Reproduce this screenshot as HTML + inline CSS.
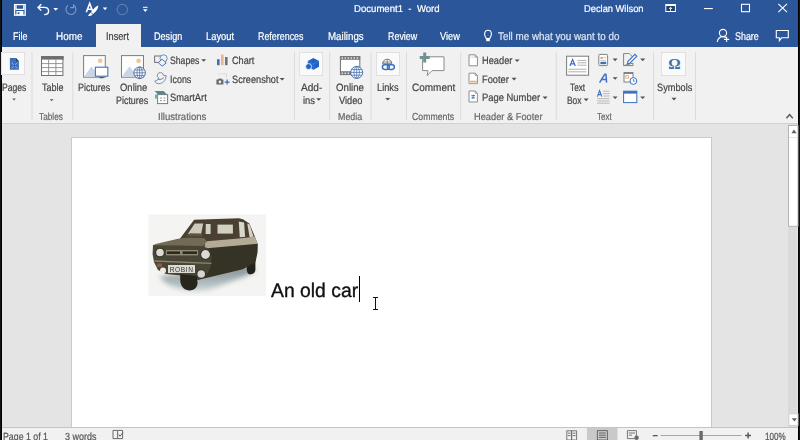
<!DOCTYPE html>
<html><head><meta charset="utf-8">
<style>
html,body{margin:0;padding:0;width:800px;height:440px;overflow:hidden;background:#000}
.t{position:absolute;font-family:"Liberation Sans",sans-serif;line-height:1;white-space:pre;text-rendering:geometricPrecision;transform-origin:0 0;-webkit-text-stroke:0.2px currentColor}
.a{position:absolute}
svg{position:absolute;overflow:visible}
</style></head><body>
<div class="a" style="left:0;top:0;width:1px;height:440px;background:#121212"></div>
<div class="a" style="left:799px;top:0;width:1px;height:440px;background:#121212"></div>
<!-- title + tabs -->
<div class="a" style="left:2px;top:0;width:796px;height:47px;background:#2b579a"></div>
<div class="a" style="left:96px;top:24px;width:45px;height:23px;background:#f1f1f1"></div>
<!-- ribbon -->
<div class="a" style="left:2px;top:47px;width:796px;height:76px;background:#f1f1f1"></div>
<div class="a" style="left:2px;top:123px;width:796px;height:1px;background:#d2d2d2"></div>
<!-- canvas -->
<div class="a" style="left:2px;top:124px;width:786px;height:303px;background:#e4e4e4"></div>
<div class="a" style="left:788px;top:124px;width:10px;height:303px;background:#dadada;box-shadow:inset -1px 0 #e6e6e6"></div>
<!-- page -->
<div class="a" style="left:71px;top:137px;width:641px;height:290px;background:#c9c9c9"></div>
<div class="a" style="left:72px;top:138px;width:639px;height:289px;background:#ffffff"></div>
<!-- status -->
<div class="a" style="left:2px;top:427px;width:796px;height:13px;background:#f1f1f1;box-shadow:inset 0 1px #c4c4c4"></div>
<svg width="800" height="440" viewBox="0 0 800 440" style="left:0;top:0">
<!-- ===== Title bar ===== -->
<g fill="none" stroke="#fff" stroke-width="1.3">
  <!-- save -->
  <rect x="14.6" y="4.6" width="10.6" height="10.6"/>
  <path d="M16 5.2 V9.4 H23.8 V5.2"/>
</g>
<rect x="16.4" y="11" width="7" height="4.2" fill="#fff"/>
<rect x="17.6" y="12.3" width="1.8" height="1.8" fill="#2b579a"/>
<!-- undo -->
<path d="M38.3 7.4 H44.2 C47 7.4 48.6 9.2 48.6 11 C48.6 12.9 47 14.6 44.2 14.6" fill="none" stroke="#fff" stroke-width="1.4"/>
<path d="M41.3 4.2 L38 7.4 L41.3 10.6" fill="none" stroke="#fff" stroke-width="1.4"/>
<path d="M53.3 8 H58.1 L55.7 10.8 Z" fill="#fff"/>
<!-- redo grayed -->
<path d="M73.6 5.2 A5 5 0 1 1 68 5.4" fill="none" stroke="#7c9bcb" stroke-width="1.1"/>
<path d="M73.6 4.2 V7.6 H70.4" fill="none" stroke="#7c9bcb" stroke-width="1.1"/>
<!-- A brush -->
<path d="M86.3 12.2 L89.7 3.4 L93.1 12.2 M87.6 9.2 H91.8" fill="none" stroke="#fff" stroke-width="1.6"/>
<path d="M98.4 5.2 C98.2 8.4 96.4 11.6 93 14 L91 12.2 C93.4 9 95.6 6.6 98.4 5.2 Z" fill="#fff"/>
<path d="M90.8 12.8 L92.6 14.4 C91.6 15.4 90 15.9 88 15.9 C88.8 14.6 89.6 13.4 90.8 12.8 Z" fill="#fff"/>
<path d="M102.8 7.6 H107.2 L105 10.2 Z" fill="#fff"/>
<!-- circle grayed -->
<circle cx="122.3" cy="9.5" r="5.2" fill="none" stroke="#6c8cc0" stroke-width="0.9"/>
<!-- customize -->
<rect x="143" y="6.8" width="4.6" height="1" fill="#fff"/>
<path d="M143 9.2 H147.6 L145.3 12 Z" fill="#fff"/>
<!-- ribbon display options -->
<rect x="665.8" y="4.5" width="9.6" height="7" fill="#1f3f70" stroke="#fff" stroke-width="1"/>
<rect x="666" y="4.4" width="9.4" height="1.6" fill="#fff"/>
<path d="M670.6 6.8 L668.8 9 H672.4 Z M670.2 8.8 H671 V11 H670.2 Z" fill="#fff"/>
<!-- minimize -->
<rect x="704" y="8" width="8.8" height="1.1" fill="#fff"/>
<!-- maximize -->
<rect x="741.5" y="4.3" width="8" height="7.4" fill="none" stroke="#fff" stroke-width="1.1"/>
<!-- close -->
<path d="M778.3 3.9 L787 12.1 M787 3.9 L778.3 12.1" fill="none" stroke="#fff" stroke-width="1.1"/>
<!-- ===== Tab row ===== -->
<!-- lightbulb -->
<path d="M486.3 38.6 C485.6 37 484.6 36.2 484.6 34 C484.6 31.6 486.2 30.2 488 30.2 C489.8 30.2 491.4 31.6 491.4 34 C491.4 36.2 490.4 37 489.7 38.6 Z" fill="none" stroke="#fff" stroke-width="1.1"/>
<rect x="486.2" y="38.6" width="3.6" height="2.6" fill="#fff"/>
<!-- share person -->
<circle cx="723" cy="33" r="3.6" fill="none" stroke="#fff" stroke-width="1.1"/>
<path d="M717.2 42 C717.8 38.6 720 36.6 723 36.6 C724.4 36.6 725.6 37 726.6 37.8" fill="none" stroke="#fff" stroke-width="1.1"/>
<path d="M726.6 36.8 V42 M724 39.4 H729.2" fill="none" stroke="#fff" stroke-width="1.1"/>
<!-- comment -->
<path d="M776.3 30.5 H788.3 V37.8 H781.6 L779.4 40.6 V37.8 H776.3 Z" fill="none" stroke="#fff" stroke-width="1.1"/>
<!-- ===== Ribbon ===== -->
<!-- separators -->
<g fill="#dcdcdc">
<rect x="31.5" y="52" width="1" height="68"/>
<rect x="72.3" y="52" width="1" height="68"/>
<rect x="294" y="52" width="1" height="68"/>
<rect x="329.2" y="52" width="1" height="68"/>
<rect x="370.4" y="52" width="1" height="68"/>
<rect x="406" y="52" width="1" height="68"/>
<rect x="460.2" y="52" width="1" height="68"/>
<rect x="555.8" y="52" width="1" height="68"/>
<rect x="653" y="52" width="1" height="68"/>
<rect x="695" y="52" width="1" height="68"/>
</g>
<!-- button boxes -->
<g fill="#fafafa" stroke="#e0e0e0" stroke-width="1">
<rect x="1.5" y="52.5" width="23" height="22"/>
<rect x="299.5" y="52.5" width="23" height="23"/>
<rect x="376.5" y="52.5" width="23" height="23"/>
<rect x="661.5" y="52.5" width="24" height="23"/>
</g>
<!-- pages icon -->
<path d="M9.9 58 H16 L18.9 61.2 V69.8 H9.9 Z" fill="#3f6fb8"/>
<path d="M16 58 V61.2 H18.9 Z" fill="#2f3f5a"/>
<path d="M11.6 62.6 L17.2 68.4 M17.2 62.6 L11.6 68.4" stroke="#a8c4ea" stroke-width="1" opacity="0.8"/>
<circle cx="14.4" cy="65.5" r="1" fill="#1d55b0"/>
<!-- dropdown arrows -->
<g fill="#555">
<path d="M12.3 98.6 H15.8 L14.05 100.6 Z"/>
<path d="M49.8 99.2 H53.5 L51.65 101.2 Z"/>
</g>
<!-- table icon -->
<rect x="41" y="56.2" width="22.4" height="3.6" fill="#6e6e6e"/>
<rect x="41.5" y="56.7" width="21.4" height="18.8" fill="#fff" stroke="#707070" stroke-width="1"/>
<rect x="41" y="56.2" width="22.4" height="3.4" fill="#6e6e6e"/>
<path d="M48.6 59.6 V75.5 M55.9 59.6 V75.5 M41.5 63.6 H62.9 M41.5 67.6 H62.9 M41.5 71.6 H62.9" stroke="#8a8a8a" stroke-width="0.9" fill="none"/>
<!-- pictures icon -->
<rect x="83.6" y="55.6" width="21.7" height="21.6" fill="#fdfdfd" stroke="#7d7d7d" stroke-width="1"/>
<circle cx="100.2" cy="60.8" r="2.4" fill="#efc7a2"/>
<path d="M84.2 76.6 L91.4 66.6 L97.6 74 L97.6 76.6 Z" fill="#c7d6e8"/>
<rect x="95.4" y="67.2" width="12.4" height="9" fill="#fff" stroke="#4d72a8" stroke-width="1.1"/>
<rect x="99.4" y="77" width="4.2" height="1.2" fill="#555"/>
<!-- online pictures icon -->
<rect x="121.5" y="55.6" width="22" height="21.6" fill="#fdfdfd" stroke="#7d7d7d" stroke-width="1"/>
<circle cx="138.6" cy="60.8" r="2.4" fill="#efc7a2"/>
<path d="M122.1 76.6 L129.4 66.6 L134 72 L134 76.6 Z" fill="#c7d6e8"/>
<circle cx="139.6" cy="72.8" r="5.8" fill="#fff" stroke="#4d72a8" stroke-width="1"/>
<path d="M133.8 72.8 H145.4 M134.6 70 H144.6 M134.6 75.6 H144.6 M139.6 67 V78.6" stroke="#4d72a8" stroke-width="0.8" fill="none"/>
<ellipse cx="139.6" cy="72.8" rx="2.6" ry="5.8" fill="none" stroke="#4d72a8" stroke-width="0.8"/>
<!-- shapes icon -->
<rect x="154.6" y="56" width="8" height="6.4" fill="none" stroke="#707070" stroke-width="1"/>
<circle cx="163.6" cy="58.4" r="3.6" fill="#f1f1f1" stroke="#6c8fbf" stroke-width="1"/>
<path d="M162.2 59.2 L166.2 63 L162.2 66.2 L158.2 62.6 Z" fill="#f1f1f1" stroke="#4a75b0" stroke-width="1"/>
<!-- icons icon -->
<path d="M159 72.8 C161 72 163.2 73 163.4 75.4 L166.2 75.6 C166 79.6 164 82.6 160.4 83.6 C157.6 84.2 155 83 154.8 81 C157 80.6 158.4 79.6 159 78.2 C157.4 77.6 156.8 75.6 157.6 74 Z" fill="none" stroke="#6c8fbf" stroke-width="1"/>
<path d="M157.6 79.2 C159.6 80 162.2 79.4 164 77.4" fill="none" stroke="#707070" stroke-width="0.9"/>
<!-- smartart icon -->
<path d="M154.6 91 H163.6 L167 94.6 H158 Z" fill="#4f8d8d"/>
<rect x="157.6" y="94.6" width="10" height="9" fill="#fff" stroke="#7a7a7a" stroke-width="1"/>
<path d="M160 98 H162 M163.4 98 H165.4 M160 100.6 H162 M163.4 100.6 H165.4" stroke="#8a8a8a" stroke-width="0.9"/>
<rect x="155" y="94.6" width="2.4" height="4" fill="#7aa8a8"/>
<!-- chart icon -->
<rect x="217" y="59.2" width="2.6" height="6" fill="#3c6fbc"/>
<rect x="221" y="54.6" width="2.6" height="10.6" fill="#e6b492"/>
<rect x="225" y="57" width="2.6" height="8.2" fill="#737373"/>
<!-- screenshot icon -->
<path d="M218.5 73.8 H226.5 V78" fill="none" stroke="#bbbbbb" stroke-width="0.8" stroke-dasharray="1 1"/>
<path d="M216.4 79.6 H218 L219 78.6 H221.2 L222.2 79.6 H223.4 V84.4 H216.4 Z" fill="#6a6a6a"/>
<circle cx="219.9" cy="81.9" r="1.3" fill="#f1f1f1"/>
<path d="M227.1 79.6 V84.6 M224.6 82.1 H229.6" stroke="#3c6fbc" stroke-width="1.3"/>
<!-- dropdown arrows small -->
<g fill="#505050">
<path d="M201.2 59.2 H206.2 L203.7 61.8 Z"/>
<path d="M279.6 78.0 H284.6 L282.1 80.6 Z"/>
<path d="M316.2 98.2 H321.2 L318.7 100.8 Z"/>
<path d="M385.2 98.0 H390.2 L387.7 100.6 Z"/>
<path d="M514.6 59.4 H519.6 L517.1 62.0 Z"/>
<path d="M511.6 77.8 H516.6 L514.1 80.4 Z"/>
<path d="M542.6 96.6 H547.6 L545.1 99.2 Z"/>
<path d="M583.6 98.6 H588.6 L586.1 101.2 Z"/>
<path d="M612.6 58.6 H617.6 L615.1 61.2 Z"/>
<path d="M612.6 77.2 H617.6 L615.1 79.8 Z"/>
<path d="M612.6 96.4 H617.6 L615.1 99.0 Z"/>
<path d="M640.2 58.6 H645.2 L642.7 61.2 Z"/>
<path d="M640.2 96.4 H645.2 L642.7 99.0 Z"/>
<path d="M671.5 97.8 H676.5 L674.0 100.4 Z"/>
</g>
<!-- add-ins icon -->
<path d="M313.4 58 L319 61 V66.8 L313.4 69.8 L307.8 66.8 V61 Z" fill="#1f63c6"/>
<path d="M307.8 61 L313.4 64 L319 61 M313.4 64 V69.8" fill="none" stroke="#4f86d8" stroke-width="0.6"/>
<circle cx="308.6" cy="66.6" r="3" fill="#1f63c6" stroke="#fafafa" stroke-width="0.8"/>
<!-- online video -->
<rect x="340.4" y="56.6" width="19.4" height="18" fill="#fff" stroke="#707070" stroke-width="1"/>
<rect x="340" y="56.2" width="20.2" height="3.6" fill="#7a7a7a"/>
<rect x="340" y="71.2" width="20.2" height="3.8" fill="#7a7a7a"/>
<g fill="#fff">
<rect x="341.6" y="57.4" width="1.4" height="1.2"/><rect x="344.6" y="57.4" width="1.4" height="1.2"/><rect x="347.6" y="57.4" width="1.4" height="1.2"/><rect x="350.6" y="57.4" width="1.4" height="1.2"/><rect x="353.6" y="57.4" width="1.4" height="1.2"/><rect x="356.6" y="57.4" width="1.4" height="1.2"/>
<rect x="341.6" y="72.6" width="1.4" height="1.2"/><rect x="344.6" y="72.6" width="1.4" height="1.2"/><rect x="347.6" y="72.6" width="1.4" height="1.2"/>
</g>
<circle cx="356.7" cy="72.4" r="6" fill="#fff" stroke="#4d72a8" stroke-width="1"/>
<path d="M350.7 72.4 H362.7 M351.5 69.6 H361.9 M351.5 75.2 H361.9 M356.7 66.4 V78.4" stroke="#4d72a8" stroke-width="0.8" fill="none"/>
<ellipse cx="356.7" cy="72.4" rx="2.7" ry="6" fill="none" stroke="#4d72a8" stroke-width="0.8"/>
<!-- links icon -->
<path d="M382.6 63.8 A4.6 4.6 0 0 1 391.8 63.8 Z" fill="#fff" stroke="#707070" stroke-width="1"/>
<path d="M383 62 H391.4 M387.2 59.2 V63.8" stroke="#707070" stroke-width="0.8"/>
<rect x="382.4" y="64.8" width="7" height="4.6" rx="2.3" fill="none" stroke="#3a6fc0" stroke-width="1.5"/>
<rect x="387.4" y="64.8" width="7" height="4.6" rx="2.3" fill="none" stroke="#3a6fc0" stroke-width="1.5"/>
<!-- comment icon -->
<path d="M422.6 56.8 H444 V70.6 H432 L427.2 75.6 L428 70.6 H422.6 Z" fill="#fff" stroke="#8a8a8a" stroke-width="1"/>
<path d="M424.7 52.6 V62.6 M419.7 57.6 H429.7" stroke="#6f9190" stroke-width="3"/>
<!-- header / footer / page number icons -->
<path d="M469 54.8 H475.2 L477.4 57 V65.8 H469 Z" fill="#fff" stroke="#8e8e8e" stroke-width="1"/>
<path d="M470 57.2 H476.6" stroke="#e8b489" stroke-width="0.9" stroke-dasharray="1.2 0.6"/>
<path d="M475.2 54.8 V57 H477.4" fill="none" stroke="#8e8e8e" stroke-width="0.8"/>
<path d="M469 73.2 H475.2 L477.4 75.4 V83.6 H469 Z" fill="#fff" stroke="#8e8e8e" stroke-width="1"/>
<path d="M470 81.4 H476.6" stroke="#e0a060" stroke-width="1.2"/>
<rect x="469.6" y="81.8" width="7.2" height="1.4" fill="#f4dcc4"/>
<path d="M475.2 73.2 V75.4 H477.4" fill="none" stroke="#8e8e8e" stroke-width="0.8"/>
<path d="M469 91 H475.2 L477.4 93.2 V102 H469 Z" fill="#fff" stroke="#8e8e8e" stroke-width="1"/>
<path d="M475.2 91 V93.2 H477.4" fill="none" stroke="#8e8e8e" stroke-width="0.8"/>
<path d="M471.4 95.6 H475 M471.4 97.8 H475 M473.6 94.6 L472.6 98.8" stroke="#3a6fc0" stroke-width="0.9"/>
<!-- text box icon -->
<rect x="566.6" y="56.2" width="22" height="19" fill="#fff" stroke="#7a7a7a" stroke-width="1"/>
<path d="M569.9 66 L572.6 59.6 L575.3 66 M570.9 63.8 H574.3" fill="none" stroke="#3a6fc0" stroke-width="1.2"/>
<path d="M577.4 60.4 H586.4 M577.4 62.8 H586.4 M577.4 65.2 H586.4 M568.4 69.2 H586.4 M568.4 71.8 H586.4" stroke="#9a9a9a" stroke-width="0.8"/>
<!-- quick parts -->
<rect x="598.8" y="54.4" width="8.8" height="11.2" rx="0.8" fill="#fff" stroke="#808080" stroke-width="1"/>
<rect x="600.4" y="57" width="2.6" height="2" fill="#e7a77a"/>
<path d="M603.6 57.6 H606 M600.4 60.4 H606" stroke="#9a9a9a" stroke-width="0.6"/>
<rect x="600.4" y="61.8" width="5.8" height="2.4" fill="#3a6fc0"/>
<!-- wordart A -->
<path d="M599.6 82.6 L604.8 74.2 L606 74.2 L606.6 82.6 M601.8 79.6 H606.2" fill="none" stroke="#4173c2" stroke-width="1.5" stroke-linejoin="bevel"/>
<!-- drop cap -->
<path d="M597.4 96.6 L599.6 90.6 L601.8 96.6 M598.3 94.6 H600.9" fill="none" stroke="#3a6fc0" stroke-width="1.1"/>
<path d="M603.2 91.2 H609.6 M603.2 93.6 H609.6 M603.2 96 H609.6 M597.2 98.6 H609.6 M597.2 101 H609.6 M597.2 103.2 H609.6" stroke="#a0a0a0" stroke-width="0.7"/>
<!-- signature line -->
<path d="M623.6 53.6 H629.2 L632 56.4 M633 63.2 V65.6 H623.6 Z" fill="#fff" stroke="#808080" stroke-width="1"/>
<path d="M623.6 53.6 V65.6" stroke="#808080" stroke-width="1"/>
<path d="M627.4 63.8 L628 61.4 L635 54.4 L636.8 56.2 L629.8 63.2 Z" fill="#fff" stroke="#3a6fc0" stroke-width="1.1"/>
<!-- date & time -->
<rect x="624" y="72.6" width="9" height="9.4" fill="#fff" stroke="#808080" stroke-width="1"/>
<rect x="624" y="72.4" width="9" height="1.6" fill="#808080"/>
<rect x="625.8" y="75.6" width="2.8" height="2.6" fill="none" stroke="#e79a6a" stroke-width="0.8"/>
<circle cx="633.4" cy="81" r="3.4" fill="#fff" stroke="#3a6fc0" stroke-width="1"/>
<path d="M633.4 79 V81.2 H635.2" fill="none" stroke="#3a6fc0" stroke-width="0.8"/>
<!-- object -->
<rect x="623.6" y="91.2" width="13.2" height="11.4" fill="#fff" stroke="#3a6fc0" stroke-width="1"/>
<rect x="623.6" y="91.2" width="13.2" height="2.4" fill="#3a6fc0"/>
<!-- omega -->
<text x="674.5" y="68.8" text-anchor="middle" font-family="Liberation Serif" font-weight="bold" font-size="15.5" fill="#3d6cb2">Ω</text>
<!-- collapse chevron -->
<path d="M786.4 118.2 L789.6 114.6 L792.8 118.2" fill="none" stroke="#555" stroke-width="1.4"/>
<!-- ===== Scrollbar ===== -->
<rect x="788.5" y="125.5" width="9.5" height="100.8" fill="#fff" stroke="#b4b4b4" stroke-width="1"/><rect x="789" y="137" width="9" height="0.8" fill="#dcdcdc"/>
<path d="M791.4 133.2 H796.6 L794 129.6 Z" fill="#606060"/>
<rect x="788.8" y="413.8" width="9.2" height="11.6" fill="#fff" stroke="#d0d0d0" stroke-width="1"/>
<path d="M791.8 418.2 H797 L794.4 421.6 Z" fill="#606060"/>
<!-- ===== Status bar ===== -->
<path d="M113 430.4 H117.6 V438.6 H113 Z" fill="none" stroke="#6a6a6a" stroke-width="1"/>
<path d="M117.6 430.4 H122.6 V438.6 H117.6" fill="none" stroke="#6a6a6a" stroke-width="1"/>
<path d="M118.6 434.4 L120 436.2 L123 432.6" fill="none" stroke="#5a5a5a" stroke-width="1"/>
<rect x="587" y="427.6" width="30.5" height="12.4" fill="#c9c9c9"/>
<!-- read mode -->
<path d="M566.8 430.8 H571.6 V440 H566.8 Z M571.6 430.8 H576.6 V440 H571.6 Z M567.8 433.2 H570.6 M567.8 435.6 H570.6 M572.6 433.2 H575.6 M572.6 435.6 H575.6" fill="none" stroke="#6a6a6a" stroke-width="0.9"/>
<!-- print layout -->
<path d="M597.4 430.6 H607.4 V440 H597.4 Z M599 433 H605.8 M599 435.2 H605.8 M599 437.4 H605.8" fill="none" stroke="#5a5a5a" stroke-width="0.9"/>
<!-- web layout -->
<path d="M627.4 430.6 H636.4 V438.6 H627.4 Z M628.8 433 H635 M628.8 435.2 H632" fill="none" stroke="#6a6a6a" stroke-width="0.9"/>
<circle cx="636.6" cy="437.8" r="2.2" fill="#6a6a6a"/>
<!-- zoom -->
<rect x="652.8" y="435" width="4.8" height="1.3" fill="#555"/>
<rect x="660.5" y="435" width="81" height="1" fill="#a6a6a6"/>
<rect x="699.4" y="431" width="3.4" height="9" fill="#6a6a6a"/>
<path d="M745.2 435.5 H751 M748.1 432.4 V438.6" stroke="#555" stroke-width="1.4"/>
<!-- text cursor + ibeam -->
<rect x="359" y="276" width="1" height="26" fill="#000"/>
<path d="M375.5 297.5 V309.5 M373 297.5 H378 M373 309.5 H378" stroke="#111" stroke-width="1"/>
</svg>
<svg width="800" height="440" viewBox="0 0 800 440" style="left:0;top:0">
<defs>
<filter id="bl" x="-30%" y="-60%" width="160%" height="220%"><feGaussianBlur stdDeviation="2.6"/></filter>
<filter id="b1" x="-5%" y="-5%" width="110%" height="110%"><feGaussianBlur stdDeviation="0.4"/></filter>
<linearGradient id="sh" x1="0" y1="0" x2="0" y2="1"><stop offset="0" stop-color="#7e8c8e"/><stop offset="1" stop-color="#c9d2d6"/></linearGradient>
</defs>
<rect x="148.5" y="214.5" width="117.5" height="81.5" fill="#f4f4f2"/>
<!-- shadow -->
<path d="M160 276 C166 290 196 294 214 288 L246 276 L256 270 L246 266 L200 272 Z" fill="url(#sh)" filter="url(#bl)"/>
<g filter="url(#b1)">
<!-- rear wheel -->
<path d="M246.6 262 H255.4 V270 C255 274 251 275 248.6 274 C247 273 246.6 270 246.6 266 Z" fill="#24241e"/>
<!-- cabin / roof -->
<path d="M179.3 239.4 L194.1 219.8 L238.8 218.2 L243 219.3 L249.4 223.5 L254.7 236.3 L257.6 244 L200 247 L179.3 244 Z" fill="#4a4131"/>
<!-- windows -->
<path d="M187.8 234.1 L194.7 223.5 L203.2 223.5 L201 234.7 Z" fill="#cdcabd"/>
<path d="M186 236.2 L190 233.2 L201.4 233.4 L202.8 236.4 Z" fill="#5a5442"/>
<path d="M205.8 224 L210.6 224 L210.6 234.1 L205.6 234.1 Z" fill="#d2cfc3"/>
<path d="M217.5 224.6 L232.9 224.6 L232.9 233.6 L217.5 233.6 Z" fill="#d3d0c3"/>
<path d="M238.8 221.4 L244.1 222.4 L245.1 236.8 L239.8 237.3 Z" fill="#d9d6cc"/>
<path d="M247.3 223.5 L249.6 224.4 L253.6 236.8 L249.6 237.3 Z" fill="#d5d2c6"/>
<!-- side reflection band -->
<path d="M204 241.6 L238.8 238.6 L254.8 236.8 L257.8 244.6 L206 249.4 Z" fill="#b3ab95"/>
<!-- lower body side -->
<path d="M204 248.6 L257.8 243.8 L257.6 252 L255.6 262 L243 269.2 L197.6 280 L196 262 Z" fill="#363226"/>
<!-- hood -->
<path d="M153.6 244.6 L178 238.8 L186 237.8 L204 238 L207 241.6 L202.4 246.4 L160 245.8 Z" fill="#736a56"/>
<!-- front face -->
<path d="M153 245 L202.4 246 L209.6 249 L211.6 256 L211 266 L206 276 L197.6 280 L186 276 L166 274 L158 270 L154 262 L152.6 254 Z" fill="#4a4434"/>
<!-- grille -->
<rect x="166" y="250" width="32" height="5.4" fill="#8f8a74"/>
<rect x="167" y="251.4" width="13" height="2.6" fill="#2c2a1e"/>
<rect x="182.6" y="251.4" width="14.4" height="2.6" fill="#2c2a1e"/>
<!-- headlights -->
<circle cx="160" cy="252.5" r="4.6" fill="#2e2c22"/>
<circle cx="160" cy="252.5" r="3.8" fill="#dcdbd4"/>
<circle cx="205.5" cy="254.5" r="5.2" fill="#2e2c22"/>
<circle cx="205.5" cy="254.5" r="4.4" fill="#dad9d2"/>
<!-- bumper -->
<path d="M154.4 261 L211.4 263.4" stroke="#8a856f" stroke-width="1.3"/>
<!-- plate -->
<rect x="168" y="265" width="27" height="8" fill="#dcdbd3"/>
<text x="181.6" y="271.6" text-anchor="middle" font-family="Liberation Sans" font-size="6.6" fill="#333" letter-spacing="0.6" style="-webkit-text-stroke:0.15px #333">ROBIN</text>
<!-- indicator + fogs -->
<rect x="157" y="263.4" width="5" height="3.6" fill="#8c5a44"/>
<circle cx="163" cy="270.6" r="3" fill="#eceae4"/>
<circle cx="201.2" cy="274" r="4.6" fill="#2e2c22"/>
<circle cx="201.2" cy="274" r="3.8" fill="#d6d5cf"/>
<!-- front wheel -->
<path d="M180.2 274 L196.8 276 L197.6 283 C197 289 193 290.6 189 290.4 C183.6 290 180.4 286 180.2 280 Z" fill="#26261f"/>
</g>
</svg>

<div class='t' style='left:354.20px;top:5.00px;font-size:10px;transform:scaleX(0.9589);color:#ffffff;'>Document1  -  Word</div>
<div class='t' style='left:584.40px;top:5.00px;font-size:10px;transform:scaleX(0.9313);color:#ffffff;'>Declan Wilson</div>
<div class='t' style='left:12.50px;top:32.00px;font-size:11.2px;transform:scaleX(0.8056);color:#ffffff;'>File</div>
<div class='t' style='left:56.20px;top:32.00px;font-size:11.2px;transform:scaleX(0.8867);color:#ffffff;'>Home</div>
<div class='t' style='left:106.40px;top:32.00px;font-size:11.2px;transform:scaleX(0.8214);color:#3d3d3d;'>Insert</div>
<div class='t' style='left:153.60px;top:32.00px;font-size:11.2px;transform:scaleX(0.8114);color:#ffffff;'>Design</div>
<div class='t' style='left:205.60px;top:32.00px;font-size:11.2px;transform:scaleX(0.8353);color:#ffffff;'>Layout</div>
<div class='t' style='left:258.30px;top:32.00px;font-size:11.2px;transform:scaleX(0.7947);color:#ffffff;'>References</div>
<div class='t' style='left:327.60px;top:32.00px;font-size:11.2px;transform:scaleX(0.8707);color:#ffffff;'>Mailings</div>
<div class='t' style='left:387.50px;top:32.00px;font-size:11.2px;transform:scaleX(0.7973);color:#ffffff;'>Review</div>
<div class='t' style='left:440.30px;top:32.00px;font-size:11.2px;transform:scaleX(0.8280);color:#ffffff;'>View</div>
<div class='t' style='left:498.00px;top:32.00px;font-size:11.2px;transform:scaleX(0.8790);color:#dfe6f0;'>Tell me what you want to do</div>
<div class='t' style='left:734.90px;top:32.00px;font-size:11.2px;transform:scaleX(0.7967);color:#ffffff;'>Share</div>
<div class='t' style='left:2.00px;top:83.00px;font-size:10.6px;transform:scaleX(0.8133);color:#444444;'>Pages</div>
<div class='t' style='left:41.50px;top:83.00px;font-size:10.6px;transform:scaleX(0.8500);color:#444444;'>Table</div>
<div class='t' style='left:39.30px;top:113.00px;font-size:10.2px;transform:scaleX(0.8133);color:#666666;'>Tables</div>
<div class='t' style='left:78.40px;top:83.00px;font-size:10.6px;transform:scaleX(0.8410);color:#444444;'>Pictures</div>
<div class='t' style='left:119.70px;top:83.00px;font-size:10.6px;transform:scaleX(0.8935);color:#444444;'>Online</div>
<div class='t' style='left:116.30px;top:96.00px;font-size:10.6px;transform:scaleX(0.8410);color:#444444;'>Pictures</div>
<div class='t' style='left:170.30px;top:56.00px;font-size:10.6px;transform:scaleX(0.8167);color:#444444;'>Shapes</div>
<div class='t' style='left:170.30px;top:75.00px;font-size:10.6px;transform:scaleX(0.8423);color:#444444;'>Icons</div>
<div class='t' style='left:170.30px;top:93.00px;font-size:10.6px;transform:scaleX(0.8786);color:#444444;'>SmartArt</div>
<div class='t' style='left:158.40px;top:113.00px;font-size:10.2px;transform:scaleX(0.9385);color:#666666;'>Illustrations</div>
<div class='t' style='left:231.60px;top:56.00px;font-size:10.6px;transform:scaleX(0.8654);color:#444444;'>Chart</div>
<div class='t' style='left:231.60px;top:75.00px;font-size:10.6px;transform:scaleX(0.8685);color:#444444;'>Screenshot</div>
<div class='t' style='left:301.00px;top:83.00px;font-size:10.6px;transform:scaleX(0.9545);color:#444444;'>Add-</div>
<div class='t' style='left:302.60px;top:96.00px;font-size:10.6px;transform:scaleX(0.8857);color:#444444;'>ins</div>
<div class='t' style='left:335.70px;top:83.00px;font-size:10.6px;transform:scaleX(0.9129);color:#444444;'>Online</div>
<div class='t' style='left:338.70px;top:96.00px;font-size:10.6px;transform:scaleX(0.8741);color:#444444;'>Video</div>
<div class='t' style='left:337.90px;top:113.00px;font-size:10.2px;transform:scaleX(0.8714);color:#666666;'>Media</div>
<div class='t' style='left:377.40px;top:83.00px;font-size:10.6px;transform:scaleX(0.8720);color:#444444;'>Links</div>
<div class='t' style='left:411.60px;top:83.00px;font-size:10.6px;transform:scaleX(0.9435);color:#444444;'>Comment</div>
<div class='t' style='left:411.60px;top:113.00px;font-size:10.2px;transform:scaleX(0.8560);color:#666666;'>Comments</div>
<div class='t' style='left:482.40px;top:56.00px;font-size:10.6px;transform:scaleX(0.8743);color:#444444;'>Header</div>
<div class='t' style='left:482.40px;top:75.00px;font-size:10.6px;transform:scaleX(0.8774);color:#444444;'>Footer</div>
<div class='t' style='left:482.40px;top:93.00px;font-size:10.6px;transform:scaleX(0.8879);color:#444444;'>Page Number</div>
<div class='t' style='left:474.40px;top:113.00px;font-size:10.2px;transform:scaleX(0.9105);color:#666666;'>Header &amp; Footer</div>
<div class='t' style='left:569.70px;top:83.00px;font-size:10.6px;transform:scaleX(0.7800);color:#444444;'>Text</div>
<div class='t' style='left:566.90px;top:96.00px;font-size:10.6px;transform:scaleX(0.7947);color:#444444;'>Box</div>
<div class='t' style='left:597.00px;top:113.00px;font-size:10.2px;transform:scaleX(0.7895);color:#666666;'>Text</div>
<div class='t' style='left:656.60px;top:83.00px;font-size:10.6px;transform:scaleX(0.8683);color:#444444;'>Symbols</div>
<div class='t' style='left:271.00px;top:282.00px;font-size:19.6px;transform:scaleX(0.9876);color:#111111;-webkit-text-stroke:0.35px currentColor;'>An old car</div>
<div class='t' style='left:2.50px;top:433.00px;font-size:10.4px;transform:scaleX(0.8453);color:#555555;'>Page 1 of 1</div>
<div class='t' style='left:64.80px;top:433.00px;font-size:10.4px;transform:scaleX(0.8622);color:#555555;'>3 words</div>
<div class='t' style='left:764.70px;top:433.00px;font-size:10.4px;transform:scaleX(0.7778);color:#555555;'>100%</div>
</body></html>
